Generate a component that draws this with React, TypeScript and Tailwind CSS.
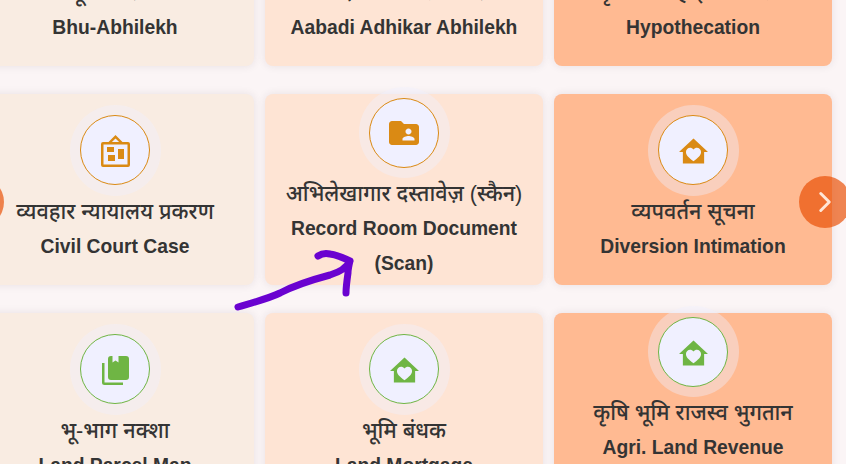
import { MdFolderShared } from 'react-icons/md'
import { ChevronRight } from 'lucide-react'
import type { ReactNode } from 'react'

const FONT = "font-['Liberation_Sans','Noto_Sans',sans-serif]"
const AMBER = 'text-[#da8a14] border-[#da8a14]'
const GREEN = 'text-[#6fb544] border-[#6fb544]'

function BoardIcon() {
  return (
    <svg viewBox="0 0 29 32" className="mt-[2px] h-[32px] w-[29px]" fill="currentColor">
      <path
        fillRule="evenodd"
        d="M14.500 0l7 7H27a2 2 0 0 1 2 2v21a2 2 0 0 1-2 2H2a2 2 0 0 1-2-2V9a2 2 0 0 1 2-2h5.500l7-7zm0 3.400L10.900 7h7.200l-3.600-3.600zM2.500 9.500v20h24v-20h-24z"
      />
      <rect x="6" y="12" width="7" height="5" />
      <rect x="7" y="20" width="7" height="6" />
      <rect x="17" y="14" width="6" height="10" />
    </svg>
  )
}

function HomeHeartIcon() {
  return (
    <svg viewBox="0 0 30 26" className="mt-[2px] h-[26px] w-[29px]" fill="currentColor">
      <path
        fillRule="evenodd"
        d="M15 0l15 14h-4v12H4V14H0L15 0zm0 23.500c5-3.700 7.800-6 7.800-9.500 0-4.500-5.300-6-7.800-2.600-2.500-3.400-7.800-1.900-7.800 2.600 0 3.500 2.800 5.800 7.800 9.500z"
      />
    </svg>
  )
}

function BooksIcon() {
  return (
    <svg viewBox="0 0 27 29" className="mt-[3px] h-[29px] w-[27px]" fill="currentColor">
      <path d="M0 7h2.500v19.500H21V29H2.500A2.500 2.500 0 0 1 0 26.500V7z" />
      <path d="M9 0h1.500v6.500l3-2 3 2V0H24a3 3 0 0 1 3 3v18a3 3 0 0 1-3 3H9a3 3 0 0 1-3-3V3a3 3 0 0 1 3-3z" />
    </svg>
  )
}

interface Service {
  hi: string
  en: string
  bg: string
  icon: ReactNode
  tone: string
}

const PEACH = 'bg-[#f9ece2]'
const SAND = 'bg-[#fee4d4]'
const ORANGE = 'bg-[#ffba92]'

const SERVICES: Service[] = [
  { hi: 'भू-अभिलेख', en: 'Bhu-Abhilekh', bg: PEACH, icon: <BooksIcon />, tone: AMBER },
  { hi: 'आबादी अधिकार अभिलेख', en: 'Aabadi Adhikar Abhilekh', bg: SAND, icon: <BoardIcon />, tone: AMBER },
  { hi: 'दृष्टिबंधक हाइपोथिकेशन', en: 'Hypothecation', bg: ORANGE, icon: <HomeHeartIcon />, tone: AMBER },
  { hi: 'व्यवहार न्यायालय प्रकरण', en: 'Civil Court Case', bg: PEACH, icon: <BoardIcon />, tone: AMBER },
  {
    hi: 'अभिलेखागार दस्तावेज़ (स्कैन)',
    en: 'Record Room Document (Scan)',
    bg: SAND,
    icon: <MdFolderShared size={36} />,
    tone: AMBER,
  },
  { hi: 'व्यपवर्तन सूचना', en: 'Diversion Intimation', bg: ORANGE, icon: <HomeHeartIcon />, tone: AMBER },
  { hi: 'भू-भाग नक्शा', en: 'Land Parcel Map', bg: PEACH, icon: <BooksIcon />, tone: GREEN },
  { hi: 'भूमि बंधक', en: 'Land Mortgage', bg: SAND, icon: <HomeHeartIcon />, tone: GREEN },
  { hi: 'कृषि भूमि राजस्व भुगतान', en: 'Agri. Land Revenue Payment', bg: ORANGE, icon: <HomeHeartIcon />, tone: GREEN },
]

function ServiceCard({ service }: { service: Service }) {
  return (
    <div
      className={`flex h-[191px] flex-col items-center justify-center rounded-lg px-5 pb-[11px] text-center text-[#343434] shadow-[0_0_8px_rgba(60,40,60,0.1)] ${service.bg}`}
    >
      <div className="flex h-[91px] w-[91px] shrink-0 items-center justify-center rounded-full bg-[#f0f0ff]/40">
        <div
          className={`flex h-[70px] w-[70px] items-center justify-center rounded-full border bg-[#f0f0ff] ${service.tone}`}
        >
          {service.icon}
        </div>
      </div>
      <p className="mt-[1px] text-[21.6px] leading-[30px] font-medium whitespace-nowrap">{service.hi}</p>
      <p className="mt-[2px] text-[19.3px] leading-[35px] font-bold">{service.en}</p>
    </div>
  )
}

export default function App() {
  return (
    <div className={`relative h-[464px] w-[846px] overflow-hidden bg-[#fbf5f6] ${FONT}`}>
      <div className="-mt-[125px] -ml-[24px] grid w-max grid-cols-[278px_278px_278px] gap-x-[11px] gap-y-[28px]">
        {SERVICES.map((service) => (
          <ServiceCard key={service.en} service={service} />
        ))}
      </div>

      {/* carousel arrows */}
      <div className="absolute top-[176px] -left-[48px] h-[52px] w-[52px] rounded-full bg-[#e94c00]/67" />
      <div className="absolute top-[176px] left-[799px] flex h-[52px] w-[52px] items-center justify-center rounded-full bg-[#e94c00]/67 text-[#ffe6d6]">
        <ChevronRight size={34} strokeWidth={2.1} />
      </div>

      {/* hand-drawn arrow */}
      <svg viewBox="0 0 846 464" className="pointer-events-none absolute inset-0 h-[464px] w-[846px]" fill="none">
        <path
          d="M238 307 C255 302 270 298 280 293 C295 285 315 279 330 275 C340 272 347 267 350 261 C344 258 337 255 330 254 C326 253 321 254 318 256 M350 261 C349 265 348 269 348 273 C347 280 346 287 346 293"
          stroke="#6a02d0"
          strokeWidth="7"
          strokeLinecap="round"
          strokeLinejoin="round"
        />
      </svg>
    </div>
  )
}
